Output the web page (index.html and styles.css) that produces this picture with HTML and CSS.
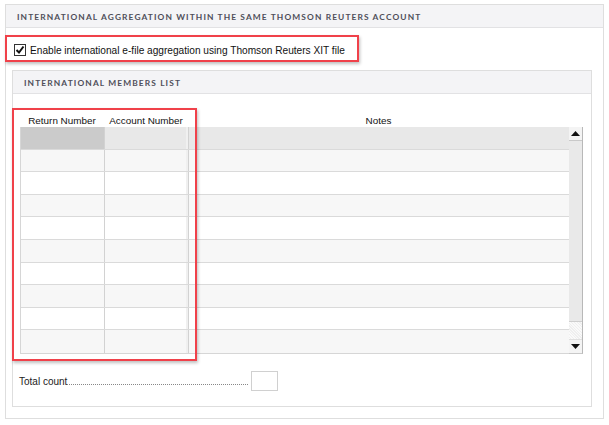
FILE: index.html
```html
<!DOCTYPE html>
<html>
<head>
<meta charset="utf-8">
<link rel="stylesheet" href="styles.css">
</head>
<body>
<div class="panel outer">
  <div class="panel-head">INTERNATIONAL AGGREGATION WITHIN THE SAME THOMSON REUTERS ACCOUNT</div>
  <div class="check-row">
    <span class="checkbox"><svg width="10" height="10" viewBox="0 0 10 10"><path d="M1.5 5 L4 7.5 L8.5 1.5" fill="none" stroke="#111" stroke-width="2"/></svg></span>
    <span class="check-label">Enable international e-file aggregation using Thomson Reuters XIT file</span>
  </div>
  <div class="panel inner">
    <div class="panel-head">INTERNATIONAL MEMBERS LIST</div>
    <div class="grid-area">
      <div class="col-heads">
        <span class="ch c1">Return Number</span>
        <span class="ch c2">Account Number</span>
        <span class="ch c3">Notes</span>
      </div>
      <div class="grid-wrap">
        <div class="grid">
          <div class="row sel"><span class="cell c1"></span><span class="cell c2"></span><span class="cell c3"></span></div>
          <div class="row alt"><span class="cell c1"></span><span class="cell c2"></span><span class="cell c3"></span></div>
          <div class="row"><span class="cell c1"></span><span class="cell c2"></span><span class="cell c3"></span></div>
          <div class="row alt"><span class="cell c1"></span><span class="cell c2"></span><span class="cell c3"></span></div>
          <div class="row"><span class="cell c1"></span><span class="cell c2"></span><span class="cell c3"></span></div>
          <div class="row alt"><span class="cell c1"></span><span class="cell c2"></span><span class="cell c3"></span></div>
          <div class="row"><span class="cell c1"></span><span class="cell c2"></span><span class="cell c3"></span></div>
          <div class="row alt"><span class="cell c1"></span><span class="cell c2"></span><span class="cell c3"></span></div>
          <div class="row"><span class="cell c1"></span><span class="cell c2"></span><span class="cell c3"></span></div>
          <div class="row alt"><span class="cell c1"></span><span class="cell c2"></span><span class="cell c3"></span></div>
        </div>
        <div class="scrollbar">
          <div class="sb-btn"><svg width="9" height="5" viewBox="0 0 9 5"><path d="M0 5 L4.5 0 L9 5 Z" fill="#111"/></svg></div>
          <div class="sb-thumb"></div>
          <div class="sb-track"></div>
          <div class="sb-btn"><svg width="9" height="5" viewBox="0 0 9 5"><path d="M0 0 L9 0 L4.5 5 Z" fill="#111"/></svg></div>
        </div>
      </div>
    </div>
    <div class="total-row">
      <span class="total-label">Total count</span>
      <span class="dots"></span>
      <span class="total-box"></span>
    </div>
  </div>
</div>
<div class="hl hl-check"></div>
<div class="hl hl-cols"></div>
</body>
</html>
```
FILE: styles.css
```css
* { box-sizing: border-box; }
body {
  margin: 0;
  background: #fff;
  font-family: "Liberation Sans", Arial, sans-serif;
  color: #222;
  position: relative;
  width: 609px;
  height: 425px;
  overflow: hidden;
}
.panel {
  border: 1px solid #dedede;
  background: #fff;
}
.outer {
  margin: 4px 0 0 5px;
  width: 599px;
  height: 415px;
  display: flex;
  flex-direction: column;
}
.panel-head {
  height: 23px;
  background: #f4f4f6;
  border-bottom: 1px solid #e2e2e4;
  font-family: "Lato", "Open Sans", sans-serif;
  font-weight: 700;
  font-size: 8.4px;
  letter-spacing: 1.12px;
  color: #4f4f5a;
  display: flex;
  align-items: center;
  padding-left: 11px;
  padding-top: 1px;
}
.check-row {
  display: flex;
  align-items: center;
  height: 22px;
  margin-top: 11px;
  padding-left: 8px;
}
.checkbox {
  width: 12px;
  height: 12px;
  border: 1px solid #333;
  background: #fff;
  display: flex;
  align-items: center;
  justify-content: center;
}
.check-label {
  font-size: 10.15px;
  margin-left: 4px;
  color: #111;
}
.inner {
  margin: 9px 11px 0 6px;
  height: 337px;
  display: flex;
  flex-direction: column;
}
.inner .panel-head {
  padding-left: 11px;
}
.grid-area {
  padding: 19px 8px 0 7px;
}
.col-heads {
  display: flex;
  height: 14px;
  font-size: 9.9px;
  color: #111;
  align-items: center;
}
.ch { text-align: center; }
.c1 { width: 84px; }
.c2 { width: 84px; }
.c3 { flex: 1; }
.col-heads .c3 { padding-right: 14px; }
.grid-wrap {
  display: flex;
  height: 227px;
}
.grid {
  flex: 1;
  display: flex;
  flex-direction: column;
  border-left: 1px solid #d6d6d6;
  border-bottom: 1px solid #d6d6d6;
}
.row {
  display: flex;
  height: 22.6px;
  border-bottom: 1px solid #dadada;
  background: #fff;
}
.row:last-child { border-bottom: 0; }
.row.alt { background: #f7f7f7; }
.row.sel { background: #e8e8e8; }
.row.sel .c1 { background: #cbcbcb; }
.cell { height: 100%; }
.cell.c1 { border-right: 1px solid #d2d2d2; }
.cell.c2 { border-right: 1px solid #d2d2d2; box-shadow: inset -2px 0 0 #f0f0f0; }
.scrollbar {
  width: 14px;
  display: flex;
  flex-direction: column;
  border-right: 1px solid #b8b8b8;
  border-bottom: 1px solid #c8c8c8;
  background: #efefef;
}
.sb-btn {
  height: 14px;
  display: flex;
  align-items: center;
  justify-content: center;
  background: #f4f4f4;
  border-bottom: 1px solid #c9c9c9;
}
.sb-btn:last-child {
  border-bottom: 0;
  border-top: 1px solid #e0e0e0;
}
.sb-thumb {
  height: 181px;
  background: #e9e9e9;
  border-bottom: 1px solid #cfcfcf;
}
.sb-track {
  flex: 1;
  background-color: #f6f6f6;
  background-image: repeating-linear-gradient(45deg, #fafafa 0 1px, #efefef 1px 2px);
}
.total-row {
  display: flex;
  align-items: center;
  margin-top: 17px;
  padding-left: 6px;
  height: 20px;
}
.total-label {
  font-size: 10px;
  color: #222;
}
.dots {
  width: 181px;
  margin-top: 7px;
  border-bottom: 1px dotted #888;
}
.total-box {
  width: 27px;
  height: 20px;
  border: 1px solid #d0d0d0;
  margin-left: 3px;
  background: #fff;
}
.hl {
  position: absolute;
  border: 2px solid #f0414a;
  box-shadow: 1px 2px 3px rgba(0,0,0,0.25);
  pointer-events: none;
}
.hl-check { left: 5px; top: 35px; width: 354px; height: 27px; }
.hl-cols { left: 12px; top: 108px; width: 185px; height: 253px; }
```
